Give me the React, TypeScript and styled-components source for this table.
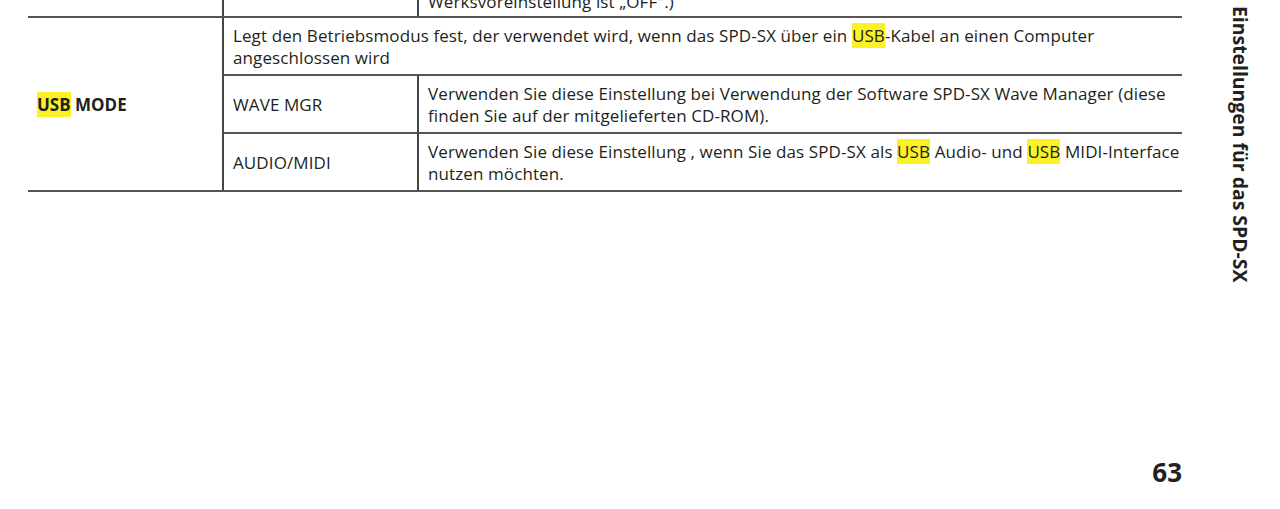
import React from "react";
import styled, { createGlobalStyle } from "styled-components";

const Global = createGlobalStyle`
  html, body { margin: 0; padding: 0; background: #ffffff; }
  body { font-family: "Open Sans", "Noto Sans", sans-serif; color: #231f20; }
`;

const Page = styled.div`
  display: flex;
  width: 1280px;
  height: 509px;
  overflow: hidden;
  background: #fff;
`;

const Main = styled.div`
  display: flex;
  flex-direction: column;
  width: 1154px;
  margin-left: 28px;
`;

const Grid = styled.div<{ $top?: boolean }>`
  display: grid;
  grid-template-columns: 194px 195px 1fr;
  ${(p) => (p.$top ? "" : "border-top: 2px solid #555555; border-bottom: 2px solid #555555;")}
  grid-template-rows: ${(p) => (p.$top ? "16px" : "58px 58px 56px")};
  overflow: hidden;
`;

const Cell = styled.div<{ $col: number; $span?: number; $rows?: number; $line?: boolean; $clip?: boolean }>`
  box-sizing: border-box;
  grid-column: ${(p) => p.$col} / span ${(p) => p.$span ?? 1};
  ${(p) => (p.$rows ? `grid-row: span ${p.$rows};` : "")}
  display: flex;
  align-items: ${(p) => (p.$clip ? "flex-end" : "center")};
  padding: ${(p) => (p.$clip ? "0 6px 3px 9px" : "2px 2px 0 9px")};
  border-left: ${(p) => (p.$col > 1 ? "2px solid #454545" : "none")};
  border-bottom: ${(p) => (p.$line ? "2px solid #555555" : "none")};
  font-size: 17px;
  line-height: 22.5px;
  letter-spacing: 0.1px;
  white-space: nowrap;
`;

const Label = styled.span`
  font-weight: 700;
  font-size: 17px;
  letter-spacing: 0;
`;

const Mark = styled.span`
  background: #fbf124;
  padding: 1px 0;
`;

const NumberBox = styled.div`
  margin-top: auto;
  align-self: flex-end;
  font-weight: 700;
  font-size: 26px;
  line-height: 26px;
  padding-bottom: 24px;
`;

const Side = styled.div`
  flex: 1;
  padding-left: 49px;
  padding-top: 6px;
`;

const Tab = styled.div`
  writing-mode: vertical-rl;
  font-weight: 700;
  font-size: 19.4px;
  line-height: 19px;
  white-space: nowrap;
`;

export default function App() {
  return (
    <>
      <Global />
      <Page>
        <Main>
          <Grid $top>
            <Cell $col={1} $clip />
            <Cell $col={2} $clip />
            <Cell $col={3} $clip>Werksvoreinstellung ist „OFF".)</Cell>
          </Grid>
          <Grid>
            <Cell $col={1} $rows={3}>
              <Label>
                <Mark>USB</Mark> MODE
              </Label>
            </Cell>
            <Cell $col={2} $span={2} $line>
              <div>
                Legt den Betriebsmodus fest, der verwendet wird, wenn das SPD-SX über ein <Mark>USB</Mark>-Kabel an einen Computer
                <br />
                angeschlossen wird
              </div>
            </Cell>
            <Cell $col={2} $line>WAVE MGR</Cell>
            <Cell $col={3} $line>
              <div>
                Verwenden Sie diese Einstellung bei Verwendung der Software SPD-SX Wave Manager (diese
                <br />
                finden Sie auf der mitgelieferten CD-ROM).
              </div>
            </Cell>
            <Cell $col={2}>AUDIO/MIDI</Cell>
            <Cell $col={3}>
              <div>
                Verwenden Sie diese Einstellung , wenn Sie das SPD-SX als <Mark>USB</Mark> Audio- und <Mark>USB</Mark> MIDI-Interface
                <br />
                nutzen möchten.
              </div>
            </Cell>
          </Grid>
          <NumberBox>63</NumberBox>
        </Main>
        <Side>
          <Tab>Einstellungen für das SPD-SX</Tab>
        </Side>
      </Page>
    </>
  );
}
